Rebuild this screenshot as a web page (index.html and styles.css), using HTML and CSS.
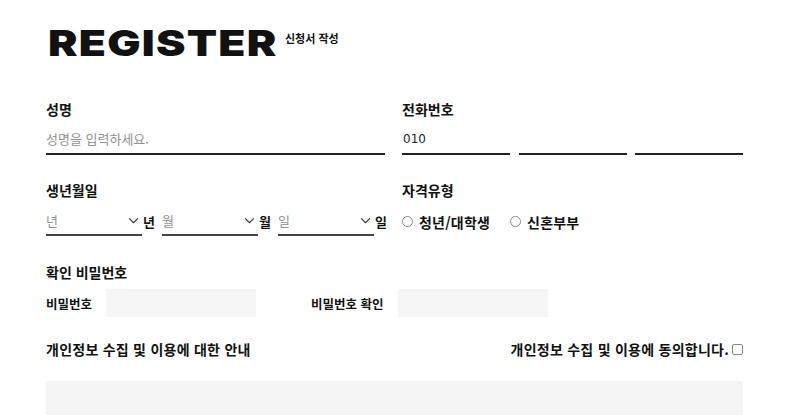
FILE: index.html
```html
<!DOCTYPE html>
<html lang="ko">
<head>
<meta charset="utf-8">
<title>Register</title>
<link rel="stylesheet" href="styles.css">
</head>
<body>
<div class="page">
  <header class="head">
    <h1 class="title"><span class="title-text">REGISTER</span></h1>
    <span class="sub">신청서 작성</span>
  </header>

  <div class="row">
    <div class="field">
      <div class="label">성명</div>
      <div class="line"><span class="ph">성명을 입력하세요.</span></div>
    </div>
    <div class="field">
      <div class="label">전화번호</div>
      <div class="phones">
        <div class="line"><span class="val">010</span></div>
        <div class="line"></div>
        <div class="line"></div>
      </div>
    </div>
  </div>

  <div class="row row2">
    <div class="field">
      <div class="label">생년월일</div>
      <div class="dates">
        <div class="dgroup">
          <div class="sel"><span class="ph">년</span><svg class="chev" viewBox="0 0 12 8"><path d="M1 1.5 L6 6.5 L11 1.5" fill="none" stroke="#333" stroke-width="1.3"/></svg></div>
          <span class="unit">년</span>
        </div>
        <div class="dgroup">
          <div class="sel"><span class="ph">월</span><svg class="chev" viewBox="0 0 12 8"><path d="M1 1.5 L6 6.5 L11 1.5" fill="none" stroke="#333" stroke-width="1.3"/></svg></div>
          <span class="unit">월</span>
        </div>
        <div class="dgroup">
          <div class="sel"><span class="ph">일</span><svg class="chev" viewBox="0 0 12 8"><path d="M1 1.5 L6 6.5 L11 1.5" fill="none" stroke="#333" stroke-width="1.3"/></svg></div>
          <span class="unit">일</span>
        </div>
      </div>
    </div>
    <div class="field">
      <div class="label">자격유형</div>
      <div class="radios">
        <label class="radio"><span class="circle"></span>청년/대학생</label>
        <label class="radio"><span class="circle"></span>신혼부부</label>
      </div>
    </div>
  </div>

  <div class="pw">
    <div class="label">확인 비밀번호</div>
    <div class="pwrow">
      <span class="pwlabel">비밀번호</span><div class="box"></div>
      <span class="pwlabel pw2">비밀번호 확인</span><div class="box"></div>
    </div>
  </div>

  <div class="agree">
    <div class="alabel">개인정보 수집 및 이용에 대한 안내</div>
    <div class="alabel">개인정보 수집 및 이용에 동의합니다.<span class="check"></span></div>
  </div>
  <div class="terms"></div>
</div>
</body>
</html>
```

FILE: styles.css
```css
* { box-sizing: border-box; }
html, body { margin: 0; padding: 0; background: #fff; }
body {
  font-family: "Noto Sans CJK KR", "Noto Sans", sans-serif;
  color: #111;
  overflow: hidden;
}
.page {
  width: 697px;
  margin-left: 46px;
}
.head {
  display: flex;
  align-items: flex-start;
  padding-top: 23px;
  height: 99px;
}
.title {
  margin: 0 0 0 2px;
  width: 227px;
  font-family: Inter, "Liberation Sans", sans-serif;
  font-weight: 900;
  font-size: 36px;
  line-height: 40px;
  color: #111;
  white-space: nowrap;
}
.title-text {
  display: inline-block;
  letter-spacing: 1px;
  transform: scaleX(1.23);
  transform-origin: left center;
}
.sub {
  font-size: 11px;
  font-weight: 700;
  margin: 8px 0 0 10px;
  line-height: 14px;
}
.row {
  display: grid;
  grid-template-columns: 339px 341px;
  column-gap: 17px;
}
.label {
  font-size: 14px;
  font-weight: 700;
  line-height: 20px;
}
.line {
  height: 36px;
  border-bottom: 2px solid #222;
  display: flex;
  align-items: center;
  padding-top: 5px;
}
.ph {
  color: #919191;
  font-size: 13px;
  font-weight: 400;
}
.val {
  color: #222;
  padding-left: 1px;
  font-family: "DejaVu Sans", sans-serif;
  font-size: 12px;
}
.phones {
  display: grid;
  grid-template-columns: 108px 108px 108px;
  column-gap: 8.5px;
}
.row2 { margin-top: 25px; }
.dates {
  display: flex;
  gap: 8px;
}
.dgroup {
  display: flex;
  align-items: center;
}
.sel {
  width: 96px;
  height: 36px;
  border-bottom: 2px solid #444;
  display: flex;
  align-items: center;
  justify-content: space-between;
  padding-top: 6px;
}
.chev { width: 11px; height: 7px; margin-right: 3px; }
.unit {
  font-size: 13px;
  font-weight: 700;
  margin-left: 1px;
  width: 11px;
  padding-top: 6px;
}
.radios {
  display: flex;
  gap: 20px;
  height: 36px;
  align-items: center;
  padding-top: 7px;
}
.radio {
  display: flex;
  align-items: center;
  font-size: 14px;
  font-weight: 700;
  letter-spacing: 0.2px;
}
.circle {
  width: 11px;
  height: 11px;
  border: 1px solid #888;
  border-radius: 50%;
  margin: 0 6px 0 0;
}
.pw { margin-top: 26px; }
.pwrow {
  display: flex;
  align-items: center;
  margin-top: 7px;
}
.pwlabel {
  font-size: 12.5px;
  font-weight: 700;
  width: 60px;
}
.pw2 { width: 87px; margin-left: 55px; }
.box {
  width: 150px;
  height: 28px;
  background: #f6f6f6;
}
.agree {
  display: flex;
  justify-content: space-between;
  margin-top: 23px;
  align-items: center;
}
.alabel {
  font-size: 14px;
  font-weight: 700;
  letter-spacing: 0.25px;
  display: flex;
  align-items: center;
  line-height: 18px;
}
.check {
  width: 11px;
  height: 11px;
  border: 1px solid #888;
  border-radius: 2px;
  margin-left: 3px;
}
.terms {
  margin-top: 23px;
  height: 120px;
  background: #f5f5f5;
}
```
